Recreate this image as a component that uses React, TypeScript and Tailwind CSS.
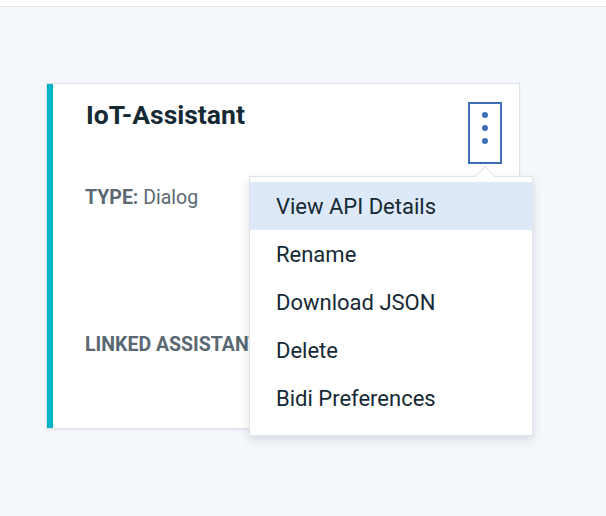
import * as React from "react"

const menuItems = ["View API Details", "Rename", "Download JSON", "Delete", "Bidi Preferences"]

function KebabButton() {
    return (
        <button className="mt-[2px] flex h-[62px] w-[34px] flex-col items-center gap-[7px] border-2 border-[#3d70b2] bg-white pt-[8px]">
            <span className="h-[6px] w-[6px] rounded-full bg-[#3d70b2]" />
            <span className="h-[6px] w-[6px] rounded-full bg-[#3d70b2]" />
            <span className="h-[6px] w-[6px] rounded-full bg-[#3d70b2]" />
        </button>
    )
}

function OverflowMenu() {
    return (
        <div className="absolute left-[202px] top-[92px] w-[284px] border border-[#e0e4e8] bg-white pb-[13px] pt-[5px] shadow-[0_4px_10px_rgba(0,0,0,0.12)]">
            {/* caret pointing at the kebab button */}
            <div className="absolute left-[228px] top-[-8px] h-[14px] w-[14px] rotate-45 border-l border-t border-[#e0e4e8] bg-white" />
            {menuItems.map((item, i) => (
                <div
                    key={item}
                    className={
                        "relative flex h-[48px] items-center px-[26px] text-[22px] text-[#152935] " +
                        (i === 0 ? "bg-[#dde8f8]" : "")
                    }
                >
                    {item}
                </div>
            ))}
        </div>
    )
}

export default function App() {
    return (
        <div className="flex h-[516px] w-[606px] flex-col bg-[#f4f7fb] font-['Roboto',sans-serif]">
            <div className="h-[7px] border-b border-[#dfe3e6] bg-white" />

            <div className="pl-[46px] pt-[76px]">
                {/* Assistant tile */}
                <div className="relative flex h-[346px] w-[474px] border border-[#e0e4e8] bg-white shadow-[0_1px_2px_rgba(0,0,0,0.08)]">
                    <div className="w-[6px] bg-[#00b4c9]" />
                    <div className="flex flex-1 flex-col">
                        <div className="flex items-start justify-between pl-[33px] pr-[17px] pt-[16px]">
                            <h3 className="text-[26.5px] font-bold leading-[30px] text-[#152935]">IoT-Assistant</h3>
                            <KebabButton />
                        </div>
                        <p className="mt-[22px] pl-[32px] text-[19.5px] leading-[24px] text-[#5a6872]">
                            <span className="font-bold">TYPE:</span> Dialog
                        </p>
                        <p className="mt-[123px] whitespace-nowrap pl-[32px] text-[19.5px] font-bold leading-[24px] text-[#5a6872]">
                            LINKED ASSISTANTS:
                        </p>
                    </div>

                    <OverflowMenu />
                </div>
            </div>
        </div>
    )
}
